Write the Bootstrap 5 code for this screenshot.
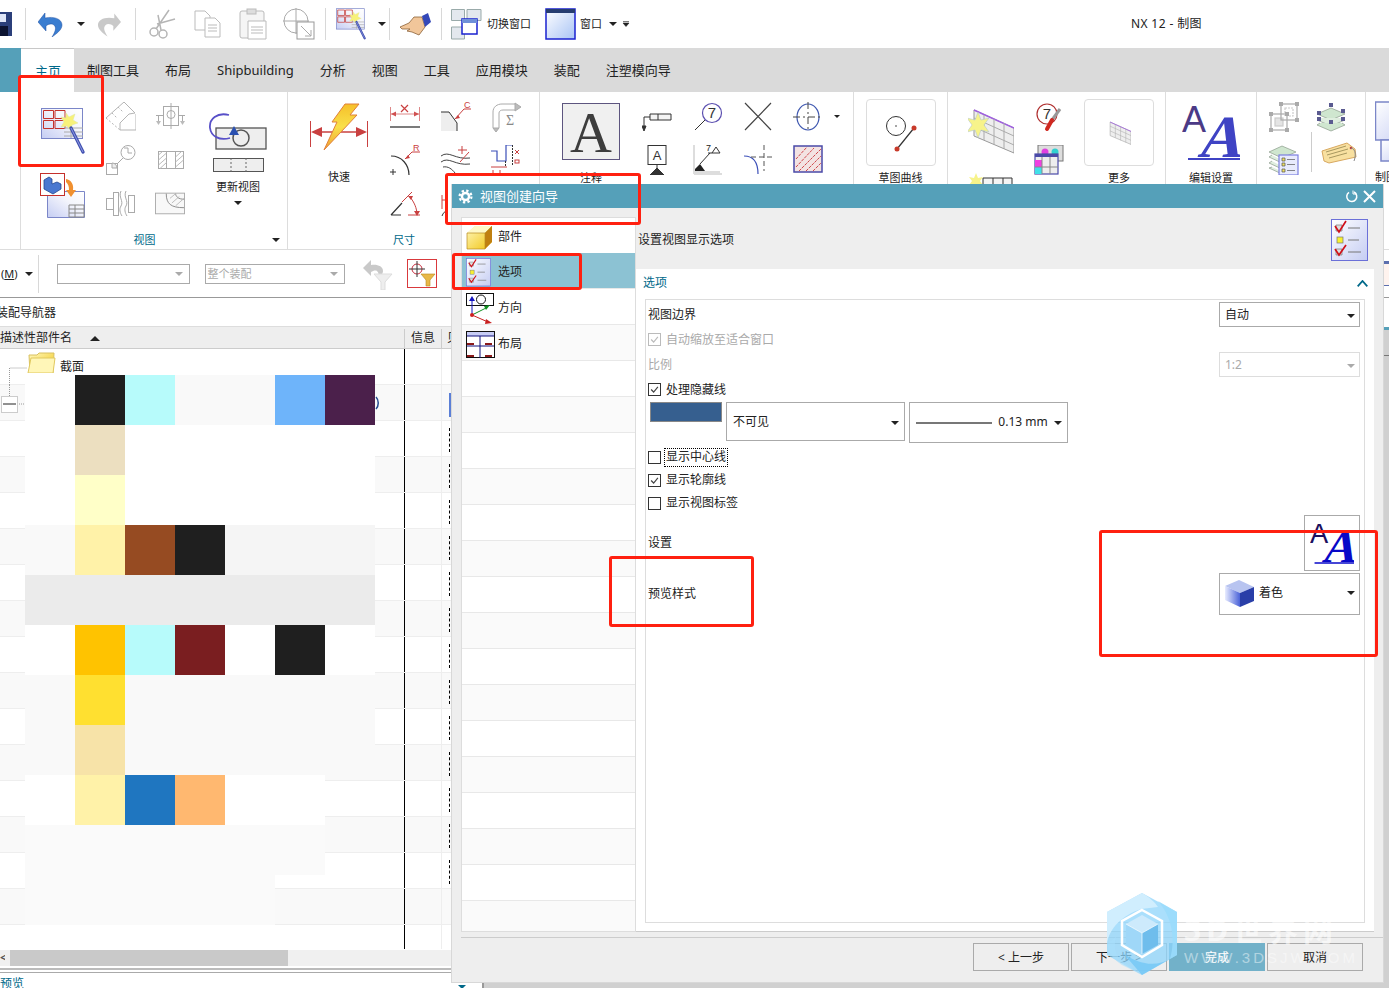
<!DOCTYPE html>
<html lang="zh-CN">
<head>
    <meta charset="UTF-8" />
    <meta name="viewport" content="width=device-width, initial-scale=1" />
    <title>NX 12 - 制图</title>
    <link href="https://cdn.jsdelivr.net/npm/bootstrap@5.3.0/dist/css/bootstrap.min.css" rel="stylesheet" />
    <style>
        body {
            margin: 0;
            background: #fff;
            font: 12px/1.2 "Noto Sans", "Noto Sans CJK SC", sans-serif;
            color: #222;
        }
        svg { display: block; flex: none; }
        .nx-app { position: relative; width: 1389px; height: 988px; overflow: hidden; }

        /* quick access bar */
        .nx-quick { height: 48px; }
        .nx-quick .nx-lbl { font-size: 11px; white-space: nowrap; }
        .nx-sep { width: 1px; height: 32px; background: #d8d8d8; flex: none; }
        .nx-title { margin-left: auto; margin-right: 187px; letter-spacing: .4px; }
        .ml1 { margin-left: 1px; } .ml3 { margin-left: 3px; } .ml4 { margin-left: 4px; } .ml5 { margin-left: 5px; }
        .ml7 { margin-left: 7px; } .ml9 { margin-left: 9px; } .ml10 { margin-left: 10px; }
        .ml12 { margin-left: 12px; } .ml13 { margin-left: 13px; } .ml14 { margin-left: 14px; } .ml15 { margin-left: 15px; }
        .ml16 { margin-left: 16px; } .ml18 { margin-left: 18px; } .ml20 { margin-left: 20px; }

        /* ribbon */
        .nx-tabs { height: 44px; background: #dadada; }
        .nx-tabs-edge { width: 21px; background: #55a0b9; flex: none; }
        .nx-tabs .nav-link {
            padding: 0 13px; line-height: 45px; font-size: 13px; color: #222; white-space: nowrap;
        }
        .nx-tabs .nav-link.active {
            padding: 0 13px 0 14px; background: #fff; color: #00698a; border-top: 1px solid #c8c8c8; line-height: 44px;
        }
        .nx-ribbon { height: 158px; border-bottom: 1px solid #ddd; overflow: hidden; font-size: 11px; }
        .nx-grp { height: 157px; border-right: 1px solid #ddd; display: flex; flex-direction: column; flex: none; }
        .nx-grp-body { display: flex; flex-grow: 1; min-height: 0; }
        .nx-grp-foot { height: 18px; display: flex; align-items: center; color: #00698a; padding-right: 7px; flex: none; }
        .nx-grp-foot span:first-child { flex-grow: 1; text-align: center; padding-right: 4px; }
        .g1 { width: 267px; } .g2 { width: 252px; } .g3 { width: 314px; } .g4 { width: 94px; }
        .g5 { width: 218px; } .g6 { width: 91px; } .g7 { width: 109px; } .g0 { width: 21px; }
        .g8 { flex: 1 1 0; border-right: 0; overflow: hidden; white-space: nowrap; }
        .nx-col { display: flex; flex-direction: column; align-items: center; flex: none; }
        .w30 { width: 30px; } .w34 { width: 34px; } .w54 { width: 54px; } .w64 { width: 64px; }
        .w70 { width: 70px; } .w71 { width: 71px; } .w72 { width: 72px; } .w83 { width: 83px; }
        .w86 { width: 86px; } .w90 { width: 90px; } .w93 { width: 93px; } .w102 { width: 102px; }
        .sm3 { padding-top: 10px; gap: 13px; }
        .bg-a { padding-top: 16px; gap: 19px; }
        .upd { padding-top: 21px; gap: 8px; }
        .upd .nx-caret { margin-top: 0; }
        .bolt { padding-top: 11px; gap: 20px; }
        .abig { padding-top: 11px; gap: 11px; }
        .box-col { padding-top: 7px; gap: 5px; }
        .aa-col { padding-top: 13px; gap: 11px; }
        .nx-tile { width: 70px; height: 67px; border: 1px solid #ddd; border-radius: 4px; display: flex; align-items: center; justify-content: center; }
        .nx-caret { width: 0; height: 0; border-left: 4px solid transparent; border-right: 4px solid transparent; border-top: 4px solid #222; flex: none; }
        .nx-caret.off { border-top-color: #aaa; }

        /* filter bar */
        .nx-bar { height: 48px; border-bottom: 1px solid #999; font-size: 11px; }
        .nx-bar .nx-sep { height: 38px; }
        .nx-pick { height: 20px; border: 1px solid #aaa; color: #aaa; display: flex; align-items: center; padding: 0 6px 0 2px; }
        .nx-pick.w-a { width: 133px; } .nx-pick.w-b { width: 140px; }
        .nx-fbox { width: 30px; height: 29px; border: 1px solid #d9393c; }
        .nx-edge { margin-left: auto; width: 5px; height: 25px; border-top: 3px solid #5c6fae; border-bottom: 1px solid #5c6fae; background: #fff3ee; }

        /* navigator */
        .nx-nav { width: 484px; flex: none; border-right: 2px solid #999; position: relative; overflow: hidden; }
        .nx-nav-title { height: 29px; border-bottom: 1px solid #ddd; padding-top: 2px; margin-left: -4px; color: #222; }
        .nx-nav-head { height: 22px; background: #eee; border-bottom: 1px solid #ccc; padding-top: 2px; }
        .nx-th-name { width: 404px; }
        .nx-th-info { width: 38px; height: 20px; border-left: 1px solid #ccc; border-right: 1px solid #ccc; padding: 2px 0 0 6px; }
        .nx-th-more { padding-left: 5px; }
        .nx-sort { width: 0; height: 0; border-left: 5px solid transparent; border-right: 5px solid transparent; border-bottom: 5px solid #222; margin-left: 18px; }
        .nx-rows { height: 600px; overflow: hidden; }
        .nx-row { height: 36px; border-bottom: 1px solid #eee; display: flex; }
        .nx-row:nth-child(even) { background: #f9f9f9; }
        .nx-td-name { width: 404px; display: flex; align-items: center; flex: none; }
        .nx-td-info { width: 38px; border-left: 1px solid #000; border-right: 1px solid #eee; flex: none; }
        .nx-td-more { flex-grow: 1; padding: 7px 0 0 7px; }
        .nx-mark { width: 3px; height: 24px; border-left: 1px dashed #000; }
        .nx-mark.on { border-left: 2px solid #5b7fd6; margin-top: 1px; }
        .nx-fold { margin-top: -10px; }
        .nx-fold-txt { padding-top: 2px; margin-left: 4px; }
        .nx-tail-mark { margin: 0 24px 0 auto; }
        .nx-mosaic {
            position: absolute; left: 25px; top: 77px;
            display: grid; grid-template-columns: repeat(7, 50px); grid-auto-rows: 50px;
        }
        .nx-scroll { height: 16px; background: #f0f0f0; margin-top: 1px; }
        .nx-thumb { width: 278px; background: #c9c9c9; margin-left: 5px; }
        .nx-back { width: 5px; overflow: hidden; line-height: 16px; font-weight: 700; color: #555; }
        .nx-rule { height: 5px; margin-top: 2px; border-top: 2px solid #bbb; border-bottom: 1px solid #aaa; }
        .nx-prev { color: #00698a; margin-top: 4px; }
        .nx-prev .nx-caret { margin: 8px 0 0 434px; border-top-color: #00698a; }
        .nx-canvas { flex: 1 1 0; background: #d0d0d0; }
        .nx-canvas-top { height: 32px; background: #fff; border-bottom: 3px solid #55a0b9; }
        .nx-canvas-line { height: 1px; background: #777; margin-top: 25px; }

        /* dialog window */
        .nx-dlg {
            position: absolute; left: 451px; top: 184px; width: 933px; height: 799px;
            background: #eee; border: 1px solid #d8d8d8; border-top: 0; display: flex; flex-direction: column;
        }
        .nx-dlg-bar { height: 24px; background: #55a0b9; color: #fff; font-size: 13px; flex: none; padding: 1px 7px 0 6px; }
        .nx-dlg-main { display: flex; flex-grow: 1; min-height: 0; }
        .nx-steps { width: 175px; margin: 9px 0 5px 9px; background: #fff; border: 1px solid #ddd; overflow: hidden; flex: none; border-radius: 0; }
        .nx-steps .list-group-item {
            height: 36px; flex: none; padding: 3px 0 0 4px; border: 0; border-bottom: 1px solid #e8e8e8; border-radius: 0;
            display: flex; align-items: center; font-size: 12px; color: #222; background: #fff;
        }
        .nx-steps .list-group-item:nth-child(even) { background: #fafafa; }
        .nx-steps .list-group-item.active { background: #8cc2d3; color: #222; }
        .nx-step-ic { width: 32px; flex: none; }
        .nx-pane { flex-grow: 1; display: flex; flex-direction: column; min-width: 0; margin-right: 9px; }
        .nx-pane-head { height: 61px; padding: 3px 6px 0 2px; flex: none; }
        .nx-panel { flex-grow: 1; background: #fff; display: flex; flex-direction: column; margin-bottom: 5px; border-bottom: 1px solid #ccc; }
        .nx-panel-title { height: 30px; padding: 0 6px 2px 7px; color: #00698a; flex: none; }
        .nx-group { flex-grow: 1; margin: 0 9px 8px 9px; border: 1px solid #ddd; padding: 2px 4px 0 2px; }
        .nx-f { display: flex; align-items: center; justify-content: space-between; }
        .h25 { height: 25px; } .h23 { height: 23px; } .h22 { height: 22px; } .h20 { height: 20px; }
        .h25 > span, .h23 > label, .h22 > label { padding-top: 2px; }
        .mt1px { margin-top: 1px; } .mt2px { margin-top: 2px; } .mt3px { margin-top: 3px; } .mt6px { margin-top: 6px; }
        .nx-off { color: #aaa; }
        .nx-sel { width: 141px; height: 25px; border: 1px solid #aaa; display: flex; align-items: center; justify-content: space-between; padding: 2px 4px 0 5px; background: #fff; }
        .nx-sel.off { border-color: #ddd; color: #aaa; }
        .nx-sel.hi { height: 42px; padding: 0 4px 2px 4px; }
        .nx-chk.form-check-input {
            width: 13px; height: 13px; margin: 0 5px 0 0; border: 1px solid #333; border-radius: 0; background-color: #fff; flex: none; float: none;
        }
        .nx-chk.form-check-input:checked {
            background-color: #fff; border-color: #333;
            background-image: url("data:image/svg+xml,%3csvg xmlns='http://www.w3.org/2000/svg' viewBox='0 0 13 13'%3e%3cpath fill='none' stroke='%23444' stroke-width='1.4' d='M2.5 6.5l3 3 5-6'/%3e%3c/svg%3e");
            background-size: 100%;
        }
        .nx-chk.form-check-input:disabled { opacity: 1; border-color: #bbb; }
        .nx-chk.form-check-input:disabled:checked {
            background-image: url("data:image/svg+xml,%3csvg xmlns='http://www.w3.org/2000/svg' viewBox='0 0 13 13'%3e%3cpath fill='none' stroke='%23bbb' stroke-width='1.4' d='M2.5 6.5l3 3 5-6'/%3e%3c/svg%3e");
        }
        .nx-swatch { width: 72px; height: 20px; background: #365f8f; border: 1px solid #888; margin: 0 4px 0 2px; flex: none; }
        .nx-s1 { width: 179px; height: 39px; border: 1px solid #aaa; padding: 2px 5px 0 6px; margin-right: 4px; display: flex; align-items: center; justify-content: space-between; }
        .nx-s2 { width: 159px; height: 41px; border: 1px solid #aaa; padding: 0 5px 0 6px; display: flex; align-items: center; justify-content: space-between; }
        .nx-wline { width: 76px; height: 2px; background: #777; }
        .nx-focus { outline: 1px dotted #000; outline-offset: 1px; }
        .nx-aa { width: 56px; height: 56px; border: 1px solid #aaa; display: flex; align-items: center; justify-content: center; }
        .nx-foot { height: 45px; border-top: 1px solid #ccc; padding: 5px 20px 0 0; gap: 2px; flex: none; display: flex; justify-content: flex-end; margin-left: 9px; }
        .nx-foot .btn {
            width: 96px; height: 28px; padding: 2px 0 0; font-size: 12px; background: #eee; border: 1px solid #aaa; border-radius: 0; color: #222;
        }
        .nx-foot .btn.nx-go { background: #72b1c9; border-color: #72b1c9; color: #fff; }

        /* red marks and watermark lying on top */
        .nx-red { position: absolute; z-index: 5; border: 3px solid #ff2010; border-radius: 3px; }
        .r1 { left: 18px; top: 75px; width: 86px; height: 92px; }
        .r2 { left: 445px; top: 173px; width: 196px; height: 52px; }
        .r3 { left: 452px; top: 253px; width: 130px; height: 37px; }
        .r4 { left: 609px; top: 556px; width: 145px; height: 71px; }
        .r5 { left: 1099px; top: 530px; width: 279px; height: 127px; }
        .nx-wm { position: absolute; z-index: 6; left: 1106px; top: 893px; display: flex; gap: 6px; pointer-events: none; }
        .nx-wm-txt { color: #fff; line-height: 1; }
        .nx-wm-big { font: 700 30px/1 "Noto Sans", "Noto Sans CJK SC", sans-serif; margin-top: 22px; opacity: .55; letter-spacing: 5px; white-space: nowrap; }
        .nx-wm-sm { font: 400 15px/1 "Liberation Sans", sans-serif; letter-spacing: 3px; margin-top: 5px; opacity: .45; white-space: nowrap; }
    </style>
</head>
<body>
<!-- shared gradients and repeated icons -->
<svg width="0" height="0">
    <defs>
        <linearGradient id="lav" x1="0" y1="0" x2="1" y2="1"><stop offset="0" stop-color="#fff"/><stop offset="1" stop-color="#c5cdf3"/></linearGradient>
        <linearGradient id="lav2" x1="0" y1="1" x2="1" y2="0"><stop offset="0" stop-color="#c5cdf3"/><stop offset=".6" stop-color="#f4f5fc"/><stop offset="1" stop-color="#fff"/></linearGradient>
        <linearGradient id="gold" x1="0" y1="0" x2="1" y2="1"><stop offset="0" stop-color="#fff8c0"/><stop offset="1" stop-color="#f1c40f"/></linearGradient>
        <linearGradient id="bolt" x1="0" y1="0" x2="0" y2="1"><stop offset="0" stop-color="#f6c02a"/><stop offset=".5" stop-color="#f9e04a"/><stop offset="1" stop-color="#f0a030"/></linearGradient>
        <linearGradient id="cubeL" x1="0" y1="0" x2="1" y2="0"><stop offset="0" stop-color="#e8ecff"/><stop offset="1" stop-color="#4a62d8"/></linearGradient>
        <linearGradient id="win" x1="0" y1="0" x2="1" y2="1"><stop offset="0" stop-color="#fff"/><stop offset="1" stop-color="#a9c4f5"/></linearGradient>
        <symbol id="i-wand" viewBox="0 0 44 46">
            <rect x=".5" y=".5" width="41" height="30" fill="url(#lav2)" stroke="#7b86c8"/>
            <path d="M2.500 2.500h10v8h-10zM14 2.500h10v8H14zM2.500 12.500h10v8h-10zM14 12.500h10v8H14z" fill="none" stroke="#c4302b"/>
            <path d="M23 20h19M23 24h19M23 28h19M30 18v12" stroke="#aaa" fill="none"/>
            <path d="M25 5l3 4 6-3-2 6 5 3-6 2-1 6-4-5-6 1 3-5-3-5 5 1z" fill="#f7f17a" stroke="#dfe6a0" stroke-width=".5"/>
            <path d="M30 20l12 24" stroke="#3f4fb0" stroke-width="3.200" stroke-linecap="round"/>
            <path d="M30 20l12 24" stroke="#8f9ae0" stroke-width="1"/>
        </symbol>
        <symbol id="i-check" viewBox="0 0 37 43">
            <rect x=".5" y=".5" width="36" height="41" fill="url(#lav)" stroke="#6b70d8"/>
            <path d="M5 6h6v6H5zM5 30h6v6H5z" fill="#ddd" stroke="#777" stroke-width=".7"/>
            <rect x="6" y="18" width="6" height="6" fill="#f7f030" stroke="#777" stroke-width=".7"/>
            <path d="M4 7l4 6 7-11M4 30l4 6 7-10" fill="none" stroke="#d0101a" stroke-width="1.7"/>
            <path d="M17 9h12M17 21h11M17 33h13" stroke="#777"/>
        </symbol>
        <symbol id="i-sheet" viewBox="0 0 46 46">
            <path d="M6 2l40 18v25L6 28z" fill="#eee" stroke="#999"/>
            <path d="M6 2l40 18" stroke="#a060e0" stroke-width="1.5" fill="none"/>
            <path d="M6 10l40 18M6 19l40 18M16 7v25M26 11v26M36 15v26" stroke="#aaa" fill="none"/>
        </symbol>
        <symbol id="i-aa" viewBox="0 0 58 55">
            <text x="0" y="27" font-family="Liberation Sans, sans-serif" font-size="36" fill="#4b3a86">A</text>
            <text x="28" y="52" transform="skewX(-14)" font-family="Liberation Serif, serif" font-size="60" font-weight="700" fill="#3f43c4">A</text>
            <path d="M6 54h52" stroke="#3f43c4" stroke-width="2"/>
        </symbol>
        <symbol id="i-aa2" viewBox="0 0 58 55">
            <text x="0" y="27" font-family="Liberation Sans, sans-serif" font-size="36" fill="#1c1060">A</text>
            <text x="28" y="52" transform="skewX(-14)" font-family="Liberation Serif, serif" font-size="60" font-weight="700" fill="#0808c8">A</text>
            <path d="M6 54h52" stroke="#0808c8" stroke-width="2"/>
        </symbol>
    </defs>
</svg>

<div class="nx-app">
    <!-- quick access -->
    <div class="nx-quick d-flex align-items-center">
        <svg width="12" height="24" viewBox="0 0 12 24"><rect x="-6" width="18" height="24" fill="#2b3f7a"/><rect x="-6" y="14" width="14" height="10" fill="#0c1330"/><rect x="-6" y="2" width="12" height="8" fill="#dfe6f7"/></svg>
        <div class="nx-sep ml13"></div>
        <svg class="ml12" width="25" height="26" viewBox="0 0 25 26"><path d="M0 11L7 2v5c9-2 17 1 17 7 0 5-6 9-10 12 3-5 5-9 2-12-2-2-6-1-8 1v5z" fill="#3a7dd0" stroke="#1f4ea0" stroke-width=".5"/></svg>
        <div class="nx-caret ml14"></div>
        <svg class="ml12" width="24" height="26" viewBox="0 0 25 26"><path d="M25 11L18 2v5C9 5 1 8 1 14c0 5 6 9 10 12-3-5-5-9-2-12 2-2 6-1 8 1v5z" fill="#c9c9c9"/></svg>
        <div class="nx-sep ml14"></div>
        <svg class="ml10" width="30" height="30" viewBox="0 0 30 30" fill="none" stroke="#b5b5b5" stroke-width="1.5"><circle cx="8" cy="23" r="4"/><circle cx="17" cy="25" r="4"/><path d="M10 20L23 1M15 21L12 6M11 15L29 10" /></svg>
        <svg class="ml18" width="27" height="28" viewBox="0 0 27 28" fill="#fff" stroke="#bbb"><path d="M1 1h10l5 5v14H1z"/><path d="M11 8h10l5 5v14H11z"/><path d="M14 15h9M14 18h9M14 21h9" /></svg>
        <svg class="ml18" width="28" height="32" viewBox="0 0 28 32" fill="#f5f5f5" stroke="#bbb"><rect x="1" y="3" width="24" height="27" rx="2"/><rect x="8" y="1" width="9" height="5" fill="#ddd"/><path d="M9 13h18v18H9z" fill="#fff"/><path d="M12 19h12M12 22h12M12 25h12"/></svg>
        <svg class="ml16" width="32" height="32" viewBox="0 0 32 32" fill="none" stroke="#aaa"><circle cx="13" cy="13" r="12"/><path d="M13 0v26M0 13h26"/><rect x="14" y="14" width="17" height="17" fill="#fff" stroke="#999"/><path d="M18 18l10 10M28 22v6h-6"/></svg>
        <div class="nx-sep ml10"></div>
        <svg class="ml10" width="30" height="32"><use href="#i-wand"/></svg>
        <div class="nx-caret ml12"></div>
        <div class="nx-sep ml3"></div>
        <svg class="ml10" width="31" height="24" viewBox="0 0 31 24"><path d="M0 15l9-4 5-6 8 0 3 10-6 8-7-3-5-1 3-2-8 0z" fill="#f1c69a" stroke="#8c6239" stroke-width=".8"/><path d="M22 4l6-3 3 9-6 5z" fill="#3448b8"/></svg>
        <div class="nx-sep ml10"></div>
        <svg class="ml9" width="31" height="32" viewBox="0 0 31 32"><path d="M.5 1.500h13v11H.5zM16 1.500h14v11H16zM.5 19h13v12H.5z" fill="#e3e8ee" stroke="#9aa"/><rect x="11" y="11" width="15" height="15" fill="#fff" stroke="#1a22d0" stroke-width="1.5"/><rect x="11" y="11" width="15" height="4" fill="#6f90d8"/></svg>
        <span class="nx-lbl ml5">切换窗口</span>
        <svg class="ml14" width="31" height="32" viewBox="0 0 31 32"><rect x="1" y="1" width="29" height="30" fill="url(#win)" stroke="#1a22d0" stroke-width="1.5"/><rect x="1" y="1" width="29" height="4" fill="#263d70"/></svg>
        <span class="nx-lbl ml4">窗口</span>
        <div class="nx-caret ml7"></div>
        <svg class="ml5" width="8" height="6" viewBox="0 0 8 6"><path d="M1 .5h6M1 2h6l-3 3.500z" fill="#222" stroke="#222" stroke-width=".6"/></svg>
        <span class="nx-title">NX 12 - 制图</span>
    </div>

    <!-- tabs -->
    <div class="nx-tabs d-flex">
        <div class="nx-tabs-edge"></div>
        <ul class="nav flex-nowrap">
            <li class="nav-item"><a class="nav-link active" href="#">主页</a></li>
            <li class="nav-item"><a class="nav-link" href="#">制图工具</a></li>
            <li class="nav-item"><a class="nav-link" href="#">布局</a></li>
            <li class="nav-item"><a class="nav-link" href="#">Shipbuilding</a></li>
            <li class="nav-item"><a class="nav-link" href="#">分析</a></li>
            <li class="nav-item"><a class="nav-link" href="#">视图</a></li>
            <li class="nav-item"><a class="nav-link" href="#">工具</a></li>
            <li class="nav-item"><a class="nav-link" href="#">应用模块</a></li>
            <li class="nav-item"><a class="nav-link" href="#">装配</a></li>
            <li class="nav-item"><a class="nav-link" href="#">注塑模向导</a></li>
        </ul>
    </div>

    <!-- ribbon -->
    <div class="nx-ribbon d-flex">
        <div class="nx-grp g0"></div>

        <div class="nx-grp g1">
            <div class="nx-grp-body">
                <div class="nx-col w83 bg-a">
                    <svg width="44" height="46"><use href="#i-wand"/></svg>
                    <svg width="45" height="45" viewBox="0 0 45 45"><path d="M7.500 18.500h37v26h-37z" fill="url(#lav2)" stroke="#7b86c8"/><path d="M29 36h15M29 40h15M35 32v12M29 32h15v12H29z" stroke="#888" fill="none"/><rect x=".5" y=".5" width="24" height="22" fill="#fff" stroke="#c4302b"/><path d="M4 7l5-3 3 2v5l5-2 4 2v5l-8 5-9-5z" fill="#4a78d0" stroke="#23468f" stroke-width=".8"/><path d="M26 6c5 1 8 5 7 11h3l-5 7-5-7h3c0-4-1-6-3-8z" fill="#f09030"/></svg>
                </div>
                <div class="nx-col w34 sm3" >
                    <svg width="30" height="30" viewBox="0 0 30 30" fill="none" stroke="#b5b5b5"><path d="M0 16L18 0l11 11-6 1-9 9v7h16V12"/><path d="M0 16l14 12M6 11l5 5M12 5l5 5" stroke-dasharray="2 2"/></svg>
                    <svg width="30" height="30" viewBox="0 0 30 30" fill="none" stroke="#aaa"><circle cx="22" cy="7.500" r="7"/><path d="M18 3h4v5h4"/><path d="M17 13l-5 5"/><rect x=".5" y="18.500" width="11" height="11"/><path d="M6 18a5 5 0 0 1 5 5H6z" fill="#eee"/></svg>
                    <svg width="30" height="30" viewBox="0 0 30 30" fill="none" stroke="#aaa"><rect x=".5" y="10.500" width="7" height="11"/><rect x="7.500" y="4.500" width="5" height="23"/><rect x="22.500" y="7.500" width="6" height="17"/><path d="M15 3c-3 6 3 10 0 15-2 3-1 7 1 10M20 3c-3 6 3 10 0 15-2 3-1 7 1 10"/></svg>
                </div>
                <div class="nx-col w64 sm3">
                    <svg width="30" height="30" viewBox="0 0 30 30" fill="none" stroke="#aaa"><rect x="8.500" y="4.500" width="15" height="19"/><circle cx="16" cy="12.500" r="4"/><path d="M16 1v26M1 13.500h7M24 13.500h6M3.500 13.500V20M27.500 13.500V20"/><path d="M1 19l2.500 4 2.500-4zM25 19l2.500 4 2.500-4z" fill="#bbb" stroke="none"/></svg>
                    <svg width="30" height="30" viewBox="0 0 30 30" fill="none" stroke="#aaa"><rect x="3.500" y="6.500" width="25" height="17"/><path d="M11.500 6.500v17M20.500 6.500v17"/><path d="M3.500 10l4-3.500M3.500 15l8-7M3.500 20l8-7M5 23.500l6.500-6M20.500 12l6-5.500M20.500 17l8-7M20.500 22l8-7" stroke="#bbb"/></svg>
                    <svg width="30" height="30" viewBox="0 0 32 30" fill="none" stroke="#aaa"><rect x=".5" y="4.500" width="31" height="22" fill="#f8f8f8"/><path d="M12 5c0 11 5 15 19 15M22 5c0 3 3 6 9 6" stroke="#888"/><path d="M16 10l6-5M18 15l8-7M22 18l9-8" stroke="#bbb"/></svg>
                </div>
                <div class="nx-col w72 upd">
                    <svg width="58" height="37" viewBox="0 0 58 37"><rect x="7" y="15" width="50" height="21" fill="#eee" stroke="#555" stroke-width="1.300"/><circle cx="32" cy="25" r="8" fill="none" stroke="#555" stroke-width="1.500"/><path d="M20 2C8-1 0 6 1 15c1 8 9 13 20 10" fill="none" stroke="#5850c8" stroke-width="1.800"/><path d="M20 22l5-9 5 9z" fill="#2a50b0"/></svg>
                    <svg width="51" height="14" viewBox="0 0 51 14"><rect x=".5" y=".5" width="50" height="13" fill="#eee" stroke="#555"/><path d="M18 0v14M33 0v14" stroke="#666" stroke-dasharray="2 2"/></svg>
                    <span>更新视图</span>
                    <div class="nx-caret"></div>
                </div>
            </div>
            <div class="nx-grp-foot"><span>视图</span><div class="nx-caret"></div></div>
        </div>

        <div class="nx-grp g2">
            <div class="nx-grp-body">
                <div class="nx-col w102 bolt">
                    <svg width="58" height="47" viewBox="0 0 58 47"><path d="M.5 18v26M57.500 18v26" stroke="#c94040"/><path d="M1 29l11-5v10zM57 29l-11-5v10z" fill="#c94040"/><path d="M12 29h34" stroke="#c94040" stroke-width="1.300"/><path d="M35 1h14l-9 11h7L14 47l13-28h-5z" fill="url(#bolt)" stroke="#e0803a"/></svg>
                    <span>快速</span>
                </div>
                <div class="nx-col w30 sm3">
                    <svg width="30" height="30" viewBox="0 0 30 30" fill="none" stroke="#d88"><path d="M.5 5v14M29.500 5v14M1 12h28"/><path d="M1 12l5-2.500v5zM29 12l-5-2.500v5z" fill="#d05050" stroke="none"/><path d="M11 3l7 7M18 3l-7 7" stroke="#c94040" stroke-width="1.200"/><path d="M0 25h30" stroke="#333" stroke-width="1.300"/></svg>
                    <svg width="30" height="30" viewBox="0 0 30 30" fill="none"><path d="M1 11c11 0 18 9 18 19" stroke="#333" stroke-width="1.200"/><path d="M15 14l7-7h8" stroke="#c94040"/><path d="M15 14l5-1-2-3z" fill="#c94040"/><path d="M0 27h6M3 24v6" stroke="#333"/><text x="23" y="6" font-size="9" fill="#c94040" font-family="Liberation Sans, sans-serif">R</text></svg>
                    <svg width="30" height="30" viewBox="0 0 30 30" fill="none"><path d="M1 27h10M1 27l11-12" stroke="#333" stroke-width="1.200"/><path d="M12 14l10-10M18 27h12" stroke="#c94040"/><path d="M20 9c4 5 7 11 7 18" stroke="#c94040"/><path d="M27 28l-3-5h6zM18 8l5 0-2 4z" fill="#c94040"/></svg>
                </div>
                <div class="nx-col w71 sm3">
                    <svg width="30" height="30" viewBox="0 0 30 30" fill="none"><path d="M0 10h8l8 11v8H0z" fill="#eee"/><path d="M0 10h8l8 11v8" stroke="#333"/><path d="M14 17l9-10h7" stroke="#c94040"/><path d="M14 17l5-1-2-3z" fill="#c94040"/><text x="23" y="6" font-size="9" fill="#c94040" font-family="Liberation Sans, sans-serif">C</text></svg>
                    <svg width="30" height="30" viewBox="0 0 30 30" fill="none" stroke="#444"><path d="M0 11c8-6 14 4 29 2M0 17c8-6 14 4 29 2M2 22c5-1 9 2 12 6"/><path d="M19 17l9-10M17 5h9M21 1v8" stroke="#c94040"/></svg>
                    <svg width="30" height="30" viewBox="0 0 30 30" fill="none"><path d="M1 7v14M1 12h5" stroke="#c94040"/><path d="M1 28c1-3 3-5 6-6" stroke="#333"/></svg>
                </div>
                <div class="nx-col w30 sm3">
                    <svg width="30" height="30" viewBox="0 0 30 30" fill="none" stroke="#aaa"><path d="M2 26V10c0-5 4-8 9-8h13M8 26V11c0-2 2-3 4-3h12"/><path d="M24 1l6 4-6 4zM2 26l3 4 3-4z" fill="#bbb"/><text x="15" y="23" font-size="14" fill="#888" stroke="none" font-family="Liberation Serif, serif">Σ</text></svg>
                    <svg width="30" height="30" viewBox="0 0 30 30" fill="none"><path d="M0 6h6v10h9V0h7" stroke="#3b4fb8" stroke-width="1.200"/><path d="M21.500 0v21M14.500 16v6" stroke="#333" stroke-dasharray="2 1"/><path d="M0 22h16M2 25v3M9 25v3" stroke="#c94040"/><path d="M24 5l4 4M28 5l-4 4" stroke="#c94040"/><rect x="24" y="15" width="4" height="3" stroke="#c94040"/></svg>
                    <svg width="30" height="30"></svg>
                </div>
            </div>
            <div class="nx-grp-foot"><span>尺寸</span><div class="nx-caret"></div></div>
        </div>

        <div class="nx-grp g3">
            <div class="nx-grp-body">
                <div class="nx-col w102 abig">
                    <svg width="58" height="57" viewBox="0 0 58 57"><rect x=".5" y=".5" width="57" height="56" fill="#f0f0f0" stroke="#5d557f"/><text x="29" y="49" text-anchor="middle" font-family="Liberation Serif, serif" font-size="58" fill="#3d3d3d">A</text></svg>
                    <span>注释</span>
                </div>
                <div class="nx-col w30 sm3">
                    <svg width="30" height="30" viewBox="0 0 30 30" fill="none" stroke="#333"><path d="M8 18h21v-6H8zM16 12v6" fill="#f4f4f4"/><path d="M8 15H2v11"/><path d="M2 29l-2-5h4z" fill="#333"/></svg>
                    <svg width="30" height="30" viewBox="0 0 30 30" fill="none" stroke="#333"><rect x="6" y="0.500" width="18" height="19" fill="#fff"/><text x="15" y="15" text-anchor="middle" font-size="13" fill="#333" stroke="none" font-family="Liberation Sans, sans-serif">A</text><path d="M15 20v4"/><path d="M8 30l7-7 7 7z" fill="#333"/></svg>
                </div>
                <div class="nx-col w71 sm3">
                    <svg width="30" height="30" viewBox="0 0 30 30" fill="none"><circle cx="19" cy="11" r="9.500" fill="#fff" stroke="#5b4fb0" stroke-width="1.200"/><text x="19" y="16" text-anchor="middle" font-size="15" fill="#333" font-family="Liberation Sans, sans-serif">7</text><path d="M12 18L2 28" stroke="#333"/></svg>
                    <svg width="30" height="30" viewBox="0 0 30 30" fill="none"><path d="M1 0v29h28" stroke="#bbb" stroke-width="1"/><path d="M1 26h26v4H1z" fill="#ddd"/><path d="M2 24l5-5 5 7H2z" fill="#222"/><path d="M7 19L17 8" stroke="#333"/><path d="M15 8h12M19 8l4-6 4 6" stroke="#333"/><text x="13" y="6" font-size="9" fill="#222" font-family="Liberation Sans, sans-serif">7</text></svg>
                </div>
                <div class="nx-col w30 sm3">
                    <svg width="30" height="30" viewBox="0 0 30 30" stroke="#444" stroke-width="1.200"><path d="M2 1l26 27M28 1L2 28"/></svg>
                    <svg width="30" height="30" viewBox="0 0 30 30" fill="none"><path d="M1 11c12 0 14 9 14 18" stroke="#3b4fb8" stroke-width="1.200"/><path d="M21 0v26M8 12h22" stroke="#555" stroke-dasharray="5 3"/></svg>
                </div>
                <div class="nx-col w70 sm3">
                    <svg width="70" height="30" viewBox="0 0 70 30" fill="none"><ellipse cx="35" cy="15" rx="11" ry="13" stroke="#3f58b0" stroke-width="1.200"/><path d="M35 0v30M20 15h30" stroke="#444" stroke-dasharray="7 3 2 3"/><path d="M61 13h6l-3 3z" fill="#222"/></svg>
                    <svg width="30" height="30" viewBox="0 0 30 30"><rect x="1" y="1" width="28" height="26" fill="#f3e3e3" stroke="#4a4aa8" stroke-width="1.500"/><path d="M3 14L14 2M3 22L21 3M6 26L28 4M13 26L28 11M20 26l8-8" stroke="#d0484d" stroke-dasharray="3 1"/></svg>
                </div>
            </div>
        </div>

        <div class="nx-grp g4">
            <div class="nx-grp-body">
                <div class="nx-col w93 box-col">
                    <div class="nx-tile"><svg width="32" height="40" viewBox="0 0 32 40" fill="none"><circle cx="11" cy="13" r="9.500" stroke="#333"/><circle cx="11" cy="13" r=".8" fill="#333"/><path d="M12 36L29 15" stroke="#333" stroke-width="1.200"/><circle cx="29" cy="15" r="2.500" fill="#c83a2a"/><circle cx="12" cy="36" r="2.500" fill="#c83a2a"/></svg></div>
                    <span>草图曲线</span>
                </div>
            </div>
        </div>

        <div class="nx-grp g5">
            <div class="nx-grp-body">
                <div class="nx-col w86 bg-a">
                    <svg width="46" height="46"><use href="#i-sheet"/><path d="M10 4l3 8 8-2-5 7 5 7-8-2-3 8-3-8-8 2 5-7-5-7 8 2z" fill="#f7f38a" stroke="#a8c0d0" stroke-width=".5"/></svg>
                    <svg width="44" height="20" viewBox="0 0 44 20"><path d="M14 5h29v15H14z" fill="#f4f4f4" stroke="#333"/><path d="M24 5v15M34 5v15" stroke="#333"/><path d="M7 0l2 5 5-1-3 4 3 4-5-1-2 5-2-5-5 1 3-4-3-4 5 1z" fill="#f7f38a"/></svg>
                </div>
                <div class="nx-col w30 sm3">
                    <svg width="30" height="30" viewBox="0 0 30 30"><circle cx="13" cy="12" r="10" fill="#fff" stroke="#b03030" stroke-width="1.200"/><text x="13" y="17" text-anchor="middle" font-size="15" fill="#333" font-family="Liberation Sans, sans-serif">7</text><path d="M26 7l-8 11" stroke="#999" stroke-width="3"/><path d="M18 18l-5 9" stroke="#d02820" stroke-width="4" stroke-linecap="round"/></svg>
                    <svg width="30" height="30" viewBox="0 0 30 30"><rect x="4" y="0" width="25" height="16" fill="#ddd" stroke="#777"/><circle cx="11" cy="7" r="3.500" fill="#e040e0"/><circle cx="21" cy="7" r="3.500" fill="#30d0d0"/><rect x="1" y="9" width="23" height="20" fill="#eee" stroke="#4a4aa8" stroke-width="1.200"/><path d="M1 9h23v3H1z" fill="#4a4aa8"/><rect x="1" y="15" width="7" height="7" fill="#f040e0"/><rect x="1" y="22" width="7" height="7" fill="#40e0e8"/><path d="M8 12v17M16 12v17M1 22h23" stroke="#888"/></svg>
                </div>
                <div class="nx-col w70 ml20 box-col">
                    <div class="nx-tile"><svg width="24" height="38"><use href="#i-sheet"/></svg></div>
                    <span>更多</span>
                </div>
            </div>
        </div>

        <div class="nx-grp g6">
            <div class="nx-grp-body">
                <div class="nx-col w90 aa-col">
                    <svg width="58" height="55"><use href="#i-aa"/></svg>
                    <span>编辑设置</span>
                </div>
            </div>
        </div>

        <div class="nx-grp g7">
            <div class="nx-grp-body">
                <div class="nx-col w54 sm3">
                    <svg width="30" height="30" viewBox="0 0 30 30" fill="none" stroke="#aaa" stroke-width="1.200"><rect x="2" y="12" width="16" height="16" fill="#fff"/><rect x="6" y="16" width="8" height="8" fill="#e4e4e4" stroke="#ccc"/><rect x="12" y="2" width="16" height="16"/><rect x="16" y="6" width="8" height="8" stroke="#ccc" stroke-dasharray="2 1"/><path d="M0 10h4v4H0zM16 10h4v4h-4zM0 26h4v4H0zM16 26h4v4h-4zM10 0h4v4h-4zM26 0h4v4h-4zM26 16h4v4h-4z" fill="#aaa" stroke="none"/></svg>
                    <svg width="30" height="30" viewBox="0 0 30 30" stroke="#8a9a8a" stroke-width=".7"><path d="M13 1l14 6-14 6L0 7z" fill="#cfe6cf"/><path d="M3 10L0 12l13 6 3-1M3 16l-3 2 13 6 3-1M3 22l-3 1 13 6 3-1" fill="#dfeedf"/><rect x="10" y="10" width="19" height="20" fill="#e8ebfd" stroke="#7b7fe0" stroke-width="1.200"/><path d="M13 13h3v3h-3zM13 18h3v3h-3zM13 24h3v3h-3z" fill="#f0e060" stroke="#555"/><path d="M18 14.500h8M18 19.500h8M18 25.500h8" stroke="#555"/></svg>
                </div>
                <div class="nx-col w54">
                    <svg class="mt1px" width="54" height="39" viewBox="0 0 54 39"><g transform="translate(6 10)" stroke="#8a9a8a" stroke-width=".7"><path d="M14 5l14 6-14 6L0 11z" fill="#cfe6cf"/><path d="M3 15l-3 2 14 6 14-6-3-2" fill="#dfeedf"/><path d="M3 20l-3 2 14 6 14-6-3-2" fill="#cfe6cf"/><path d="M12 0h4v4h-4zM0 8h4v4H0zM24 6h4v4h-4zM0 14h4v4H0zM24 14h4v4h-4zM12 17h4v4h-4z" fill="#5a5a90" stroke="none"/></g></svg>
                    <svg width="54" height="40" viewBox="0 0 54 40" fill="none"><path d="M.5 0v40" stroke="#ccc"/><path d="M11 19l25-8 8 6 1 8-27 6-5-2z" fill="#f8e0a0" stroke="#d8a860"/><path d="M15 20l20-6M16 23l21-6M18 26l18-5" stroke="#a89860"/><circle cx="40" cy="16" r="1.300" fill="#c04040"/><path d="M40 16c5 1 5 8 3 13" stroke="#888"/></svg>
                </div>
            </div>
        </div>

        <div class="nx-grp g8">
            <svg class="ml9 mt2px" width="14" height="70" viewBox="0 0 14 70"><rect x=".5" y="8" width="40" height="38" fill="url(#lav)" stroke="#7b86c8" stroke-width="1.500"/><rect x="6" y="46" width="40" height="21" fill="url(#lav)" stroke="#7b86c8" stroke-width="1.500"/></svg>
            <span class="ml9 mt6px">制图</span>
        </div>
    </div>

    <!-- filter bar -->
    <div class="nx-bar d-flex align-items-center">
        <span class="ml1">(<u>M</u>)</span>
        <div class="nx-caret ml7"></div>
        <div class="nx-sep ml5"></div>
        <div class="nx-pick w-a ml18"><div class="nx-caret off ms-auto"></div></div>
        <div class="nx-pick w-b ml15">整个装配<div class="nx-caret off ms-auto"></div></div>
        <svg class="ml18" width="30" height="32" viewBox="0 0 30 32"><path d="M0 10l8-8v5c6-1 12 1 12 6 0 3-3 6-5 7 1-3 1-5-1-7-2-1-4 0-6 1v4z" fill="#c9c9c9"/><path d="M11 16h18l-7 8v8h-4v-8z" fill="#eee" stroke="#ddd"/></svg>
        <div class="nx-fbox ml14 d-flex">
            <svg width="28" height="27" viewBox="0 0 28 27" fill="none"><circle cx="9" cy="9" r="5" stroke="#c83040"/><path d="M9 1v16M1 9h16" stroke="#333"/><path d="M13 14h14l-5 6v6h-4v-6z" fill="#e8b848" stroke="#b88820" stroke-width=".6"/></svg>
        </div>
        <div class="nx-edge"></div>
    </div>

    <!-- navigator and graphics area -->
    <div class="d-flex">
        <div class="nx-nav">
            <div class="nx-nav-title d-flex align-items-center">装配导航器</div>
            <div class="nx-nav-head d-flex align-items-center">
                <div class="nx-th-name d-flex align-items-center">描述性部件名<span class="nx-sort"></span></div>
                <div class="nx-th-info">信息</div>
                <div class="nx-th-more">贝</div>
            </div>
            <div class="nx-rows" id="navRows">
                <div class="nx-row">
                    <div class="nx-td-name">
                        <svg width="27" height="36" viewBox="0 0 27 36"><path d="M9.500 36V19H27" fill="none" stroke="#999" stroke-dasharray="1 1"/></svg>
                        <svg class="nx-fold" width="29" height="22" viewBox="0 0 29 22"><path d="M2 4h8l2-2h15l-1 20H3z" fill="url(#gold)" stroke="#d8c060"/><path d="M1 22l3-15h24l-2 15z" fill="#fff6b8" stroke="#e0c860"/></svg>
                        <span class="nx-fold-txt">截面</span>
                    </div>
                    <div class="nx-td-info"></div>
                    <div class="nx-td-more"></div>
                </div>
                <div class="nx-row">
                    <div class="nx-td-name">
                        <svg width="26" height="36" viewBox="0 0 26 36"><path d="M9.500 0v11M17 19h9" stroke="#999" stroke-dasharray="1 1" fill="none"/><rect x="1.500" y="11.500" width="16" height="16" fill="#fff" stroke="#ccc"/><path d="M3 19h13" stroke="#222"/></svg>
                        <svg class="nx-tail-mark" width="6" height="14" viewBox="0 0 6 14"><path d="M2 1c3 3 3 9 0 12" fill="none" stroke="#234a90" stroke-width="1.500"/></svg>
                    </div>
                    <div class="nx-td-info"></div>
                    <div class="nx-td-more"><div class="nx-mark on"></div></div>
                </div>
            </div>
            <div class="nx-scroll d-flex"><div class="nx-back">&lt;</div><div class="nx-thumb"></div></div>
            <div class="nx-rule"></div>
            <div class="nx-prev d-flex">预览<div class="nx-caret"></div></div>
            <div class="nx-mosaic" id="mosaic"></div>
        </div>
        <div class="nx-canvas">
            <div class="nx-canvas-top"></div>
            <div class="nx-canvas-line"></div>
        </div>
    </div>

    <!-- dialog -->
    <div class="nx-dlg">
        <div class="nx-dlg-bar d-flex align-items-center">
            <svg width="15" height="15" viewBox="0 0 16 16" fill="none" stroke="#fff"><circle cx="8" cy="8" r="3.800" stroke-width="2.600"/><circle cx="8" cy="8" r="6.300" stroke-width="2.400" stroke-dasharray="2.500 2.450"/></svg>
            <span class="ml7">视图创建向导</span>
            <svg class="ms-auto" width="13" height="13" viewBox="0 0 13 13" fill="none" stroke="#fff" stroke-width="1.500"><path d="M4 2.300A5 5 0 1 0 9 2"/><path d="M8 0.500v3.500h3.500"  stroke-width="1"/></svg>
            <svg class="ml5" width="13" height="13" viewBox="0 0 13 13" stroke="#fff" stroke-width="2"><path d="M1 1l11 11M12 1L1 12"/></svg>
        </div>
        <div class="nx-dlg-main">
            <div class="list-group list-group-flush nx-steps" id="steps">
                <div class="list-group-item">
                    <div class="nx-step-ic"><svg width="27" height="25" viewBox="0 0 27 25"><path d="M1 8l8-7h17v16l-7 7H1z" fill="url(#gold)"/><path d="M19 8l7-7v16l-7 7z" fill="#c08010"/><path d="M1 8l8-7h17l-7 7z" fill="#fff9c8"/><path d="M1 8h18v16H1zM19 8l7-7" fill="none" stroke="#b88a20" stroke-width=".7"/></svg></div>
                    部件
                </div>
                <div class="list-group-item active">
                    <div class="nx-step-ic"><svg width="25" height="29"><use href="#i-check"/></svg></div>
                    选项
                </div>
                <div class="list-group-item">
                    <div class="nx-step-ic"><svg width="29" height="31" viewBox="0 0 29 31"><rect x=".5" y=".5" width="27" height="12" fill="#fff" stroke="#111"/><circle cx="15" cy="6.500" r="4.500" fill="#fff" stroke="#111"/><path d="M6 21V6" stroke="#1515c0"/><path d="M3 8l3-5 3 5z" fill="#1515c0"/><path d="M6 22l14-7" stroke="#109020"/><path d="M18 13l6-1-4 5z" fill="#109020"/><path d="M6 22l16 7" stroke="#c82020"/><path d="M20 26l6 4-7 1z" fill="#c82020"/><circle cx="6" cy="22" r="2" fill="#d02020"/></svg></div>
                    方向
                </div>
                <div class="list-group-item">
                    <div class="nx-step-ic"><svg width="29" height="27" viewBox="0 0 29 27"><rect x=".5" y=".5" width="28" height="26" fill="#fff" stroke="#111"/><rect x="1" y="1" width="27" height="4" fill="#c8cdf5"/><path d="M1 5h27M14 5v22M1 15h27" stroke="#10107a"/><path d="M1 13h7M19 13h7M1 25h7M19 25h7" stroke="#8a1a1a" stroke-width="2"/></svg></div>
                    布局
                </div>
            </div>
            <div class="nx-pane">
                <div class="nx-pane-head d-flex align-items-center justify-content-between">
                    <span>设置视图显示选项</span>
                    <svg width="37" height="43"><use href="#i-check"/></svg>
                </div>
                <div class="nx-panel">
                    <div class="nx-panel-title d-flex align-items-center justify-content-between">
                        <span>选项</span>
                        <svg width="11" height="7" viewBox="0 0 11 7" fill="none" stroke="#00698a" stroke-width="1.800"><path d="M.7 6.300L5.500 1l4.800 5.300"/></svg>
                    </div>
                    <div class="nx-group">
                        <div class="nx-f h25">
                            <span>视图边界</span>
                            <div class="nx-sel">自动<div class="nx-caret"></div></div>
                        </div>
                        <div class="nx-f h22 mt1px">
                            <label class="d-flex align-items-center nx-off"><input class="form-check-input nx-chk" type="checkbox" checked disabled />自动缩放至适合窗口</label>
                        </div>
                        <div class="nx-f h25 mt2px">
                            <span class="nx-off">比例</span>
                            <div class="nx-sel off">1:2<div class="nx-caret off"></div></div>
                        </div>
                        <div class="nx-f h20 mt3px">
                            <label class="d-flex align-items-center"><input class="form-check-input nx-chk" type="checkbox" checked />处理隐藏线</label>
                        </div>
                        <div class="d-flex align-items-start mt2px">
                            <div class="nx-swatch"></div>
                            <div class="nx-s1">不可见<div class="nx-caret"></div></div>
                            <div class="nx-s2"><div class="nx-wline"></div><span>0.13 mm</span><div class="nx-caret"></div></div>
                        </div>
                        <div class="nx-f h23 mt2px">
                            <label class="d-flex align-items-center"><input class="form-check-input nx-chk" type="checkbox" /><span class="nx-focus">显示中心线</span></label>
                        </div>
                        <div class="nx-f h23">
                            <label class="d-flex align-items-center"><input class="form-check-input nx-chk" type="checkbox" checked />显示轮廓线</label>
                        </div>
                        <div class="nx-f h23">
                            <label class="d-flex align-items-center"><input class="form-check-input nx-chk" type="checkbox" />显示视图标签</label>
                        </div>
                        <div class="nx-f mt1px">
                            <span>设置</span>
                            <div class="nx-aa"><svg width="44" height="42"><use href="#i-aa2"/></svg></div>
                        </div>
                        <div class="nx-f mt2px">
                            <span>预览样式</span>
                            <div class="nx-sel hi">
                                <span class="d-flex align-items-center"><svg width="30" height="28" viewBox="0 0 30 28"><path d="M1 7l14-6 15 7-14 6z" fill="#b8c4f0"/><path d="M1 7l15 7v14L1 21z" fill="url(#cubeL)"/><path d="M16 14l14-6v14l-14 6z" fill="#2a3fa8"/></svg><span class="ml5">着色</span></span>
                                <div class="nx-caret"></div>
                            </div>
                        </div>
                    </div>
                </div>
            </div>
        </div>
        <div class="nx-foot">
            <button type="button" class="btn">&lt; 上一步</button>
            <button type="button" class="btn">下一步 &gt;</button>
            <button type="button" class="btn nx-go">完成</button>
            <button type="button" class="btn">取消</button>
        </div>
    </div>

    <div class="nx-red r1"></div>
    <div class="nx-red r2"></div>
    <div class="nx-red r3"></div>
    <div class="nx-red r4"></div>
    <div class="nx-red r5"></div>

    <div class="nx-wm">
        <svg width="72" height="82" viewBox="0 0 72 82">
            <path d="M36 0l35 19v43L36 82 1 62V19z" fill="#8ed4fb" fill-opacity=".75"/>
            <path d="M36 0L1 19v32c2-16 16-29 34-35l17-2c-3-5-9-10-16-14z" fill="#d4effe" fill-opacity=".92"/>
            <path d="M52 8l19 11v43l-7 4c6-20 2-42-12-58z" fill="#9adcfc" fill-opacity=".85"/>
            <path d="M1 51c1 8 5 14 15 21l20 10-20-14c-6-6-9-14-6-24z" fill="#a8defb" fill-opacity=".6"/>
            <path d="M17 60l19 22 28-16c-13 8-32 6-47-6z" fill="#76c8f6" fill-opacity=".85"/>
            <path d="M36 17L56 28v24L36 64 16 52V28z" fill="none" stroke="#fff" stroke-width="2.500"/>
            <path d="M20 31l16-9 16 9-16 9z" fill="#cdeafc"/><path d="M20 31l16 9v21l-16-9z" fill="#9fd7f8"/><path d="M36 40l16-9v21l-16 9z" fill="#6fbdec"/>
            <path d="M36 40v21M20 31l16 9 16-9" fill="none" stroke="#fff" stroke-opacity=".7"/>
        </svg>
        <div class="nx-wm-txt">
            <div class="nx-wm-big">3D世界网</div>
            <div class="nx-wm-sm">WWW.3DSJW.COM</div>
        </div>
    </div>
</div>

<script>
    // rest of the navigator rows
    const rows = document.getElementById('navRows');
    for (let i = 2; i < 17; i++) {
        const row = document.createElement('div');
        row.className = 'nx-row';
        row.innerHTML = '<div class="nx-td-name"></div><div class="nx-td-info"></div><div class="nx-td-more">' +
            (i < 15 ? '<div class="nx-mark"></div>' : '') + '</div>';
        rows.appendChild(row);
    }

    // empty rows of the step list
    const steps = document.getElementById('steps');
    for (let i = 4; i < 20; i++) {
        const item = document.createElement('div');
        item.className = 'list-group-item';
        steps.appendChild(item);
    }

    // pixelated cover over the part names
    const cover = [
        ['#fff', '#1f1f1f', '#b7fbfb', '#f9f9f9', '#f9f9f9', '#6eb4fa', '#4b204b'],
        ['#fff', '#ecdfc0', '#fff', '#fff', '#fff', '#fff', '#fff'],
        ['#fff', '#ffffc8', '#fff', '#fff', '#fff', '#fff', '#fff'],
        ['#f9f9f9', '#fff2a8', '#964b22', '#1f1f1f', '#f5f5f5', '#f5f5f5', '#f5f5f5'],
        ['#ebebeb', '#ebebeb', '#ebebeb', '#ebebeb', '#ebebeb', '#ebebeb', '#ebebeb'],
        ['#fff', '#ffc300', '#b7fbfb', '#7a1e20', '#fff', '#1f1f1f', '#fff'],
        ['#f9f9f9', '#ffe030', '#f9f9f9', '#f9f9f9', '#f9f9f9', '#f9f9f9', '#f9f9f9'],
        ['#f9f9f9', '#f7e3a8', '#f9f9f9', '#f9f9f9', '#f9f9f9', '#f9f9f9', '#f9f9f9'],
        ['#fff', '#fff2a8', '#1f76c0', '#ffb870', '#fff', '#fff'],
        ['#fafafa', '#fafafa', '#fafafa', '#fafafa', '#fafafa', '#fafafa'],
        ['#fafafa', '#fafafa', '#fafafa', '#fafafa', '#fafafa']
    ];
    const mosaic = document.getElementById('mosaic');
    cover.forEach(line => {
        for (let c = 0; c < 7; c++) {
            const cell = document.createElement('div');
            if (line[c]) cell.style.background = line[c];
            mosaic.appendChild(cell);
        }
    });
</script>
<script src="https://cdn.jsdelivr.net/npm/bootstrap@5.3.0/dist/js/bootstrap.bundle.min.js"></script>
</body>
</html>
